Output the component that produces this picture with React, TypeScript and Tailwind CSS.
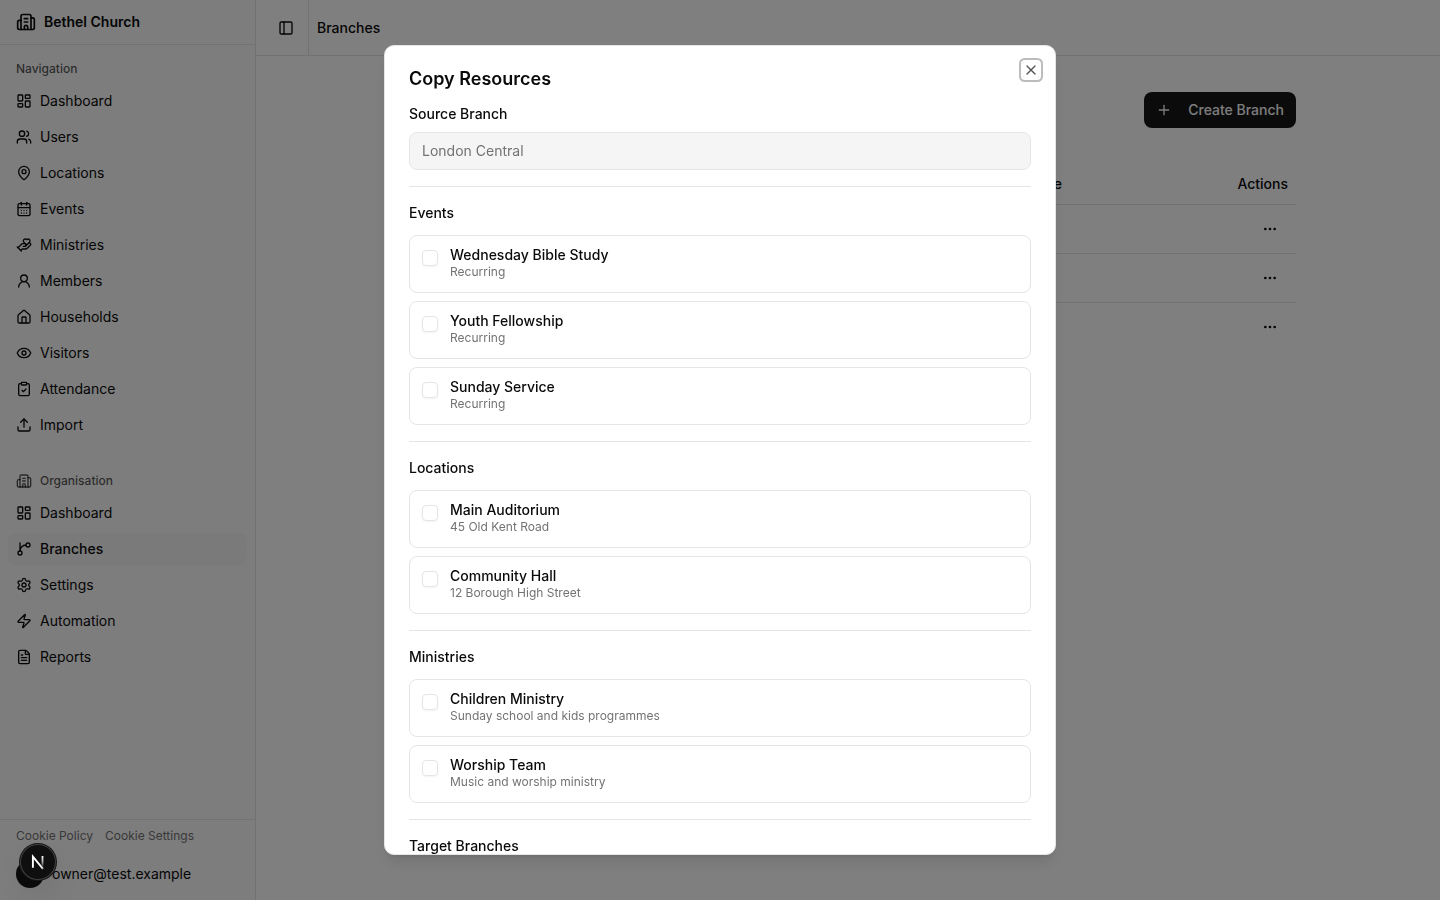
import React from "react";
import {
  Building2,
  CalendarDays,
  ClipboardCheck,
  Ellipsis,
  Eye,
  FileText,
  HandHeart,
  House,
  LayoutDashboard,
  MapPin,
  PanelLeft,
  Plus,
  Settings,
  Upload,
  UserRound,
  Users,
  X,
  Zap,
} from "lucide-react";

type IconType = React.ComponentType<{ className?: string }>;
type NavEntry = { label: string; icon: IconType; active?: boolean };
type Resource = { name: string; detail: string };

function BranchIcon({ className }: { className?: string }) {
  return (
    <svg
      viewBox="0 0 24 24"
      fill="none"
      stroke="currentColor"
      strokeWidth="2"
      strokeLinecap="round"
      strokeLinejoin="round"
      aria-hidden="true"
      className={className}
    >
      <path d="M15 6a9 9 0 0 0-9 9V3" />
      <circle cx="18" cy="6" r="3" />
      <circle cx="6" cy="18" r="3" />
    </svg>
  );
}

const navigation: NavEntry[] = [
  { label: "Dashboard", icon: LayoutDashboard },
  { label: "Users", icon: Users },
  { label: "Locations", icon: MapPin },
  { label: "Events", icon: CalendarDays },
  { label: "Ministries", icon: HandHeart },
  { label: "Members", icon: UserRound },
  { label: "Households", icon: House },
  { label: "Visitors", icon: Eye },
  { label: "Attendance", icon: ClipboardCheck },
  { label: "Import", icon: Upload },
];

const organisation: NavEntry[] = [
  { label: "Dashboard", icon: LayoutDashboard },
  { label: "Branches", icon: BranchIcon, active: true },
  { label: "Settings", icon: Settings },
  { label: "Automation", icon: Zap },
  { label: "Reports", icon: FileText },
];

const sections: { title: string; items: Resource[] }[] = [
  {
    title: "Events",
    items: [
      { name: "Wednesday Bible Study", detail: "Recurring" },
      { name: "Youth Fellowship", detail: "Recurring" },
      { name: "Sunday Service", detail: "Recurring" },
    ],
  },
  {
    title: "Locations",
    items: [
      { name: "Main Auditorium", detail: "45 Old Kent Road" },
      { name: "Community Hall", detail: "12 Borough High Street" },
    ],
  },
  {
    title: "Ministries",
    items: [
      { name: "Children Ministry", detail: "Sunday school and kids programmes" },
      { name: "Worship Team", detail: "Music and worship ministry" },
    ],
  },
  { title: "Target Branches", items: [] },
];

const rows = [1, 2, 3];

function NavList({ entries }: { entries: NavEntry[] }) {
  return (
    <ul className="flex flex-col gap-1">
      {entries.map(({ label, icon: Icon, active }) => (
        <li key={label}>
          <a
            href="#"
            aria-current={active ? "page" : undefined}
            className={
              active
                ? "flex h-8 items-center gap-2 rounded-lg bg-[#f5f5f5] px-2 text-sm font-medium"
                : "flex h-8 items-center gap-2 rounded-lg px-2 text-sm"
            }
          >
            <Icon className="size-4 shrink-0" />
            <span>{label}</span>
          </a>
        </li>
      ))}
    </ul>
  );
}

function Sidebar() {
  return (
    <aside className="flex h-screen w-64 shrink-0 flex-col border-r border-[#e5e5e5] bg-[#fafafa]">
      <div className="flex h-[45px] shrink-0 items-center gap-2 border-b border-[#e5e5e5] px-4 text-sm font-semibold">
        <Building2 className="size-5" />
        <span>Bethel Church</span>
      </div>
      <nav className="flex min-h-0 flex-1 flex-col gap-2 overflow-hidden">
        <section className="p-2">
          <h2 className="flex h-8 items-center px-2 text-xs font-medium text-[#0a0a0a]/70">Navigation</h2>
          <NavList entries={navigation} />
        </section>
        <section className="p-2">
          <h2 className="flex h-8 items-center gap-2 px-2 text-xs font-medium text-[#0a0a0a]/70">
            <Building2 className="size-4" />
            Organisation
          </h2>
          <NavList entries={organisation} />
        </section>
      </nav>
      <footer className="flex flex-col gap-3 border-t border-[#e5e5e5] p-2">
        <div className="flex gap-3 px-2 text-xs text-[#737373]">
          <a href="#">Cookie Policy</a>
          <button type="button">Cookie Settings</button>
        </div>
        <button type="button" className="flex h-9 items-center gap-2 px-2 text-sm">
          <span className="size-7 rounded-full bg-[#171717]" />
          <span>owner@test.example</span>
        </button>
      </footer>
    </aside>
  );
}

function BranchesPage() {
  return (
    <div className="flex min-w-0 flex-1 flex-col">
      <header className="flex h-14 items-center gap-2 border-b border-[#e5e5e5] px-4">
        <button type="button" aria-label="Toggle sidebar" className="flex size-7 items-center justify-center">
          <PanelLeft className="size-4" />
        </button>
        <div className="w-px self-stretch bg-[#e5e5e5]" />
        <h1 className="text-sm font-medium">Branches</h1>
      </header>
      <main className="mx-auto flex w-full max-w-4xl flex-col gap-9 pt-9">
        <button
          type="button"
          className="flex h-9 items-center gap-4 self-end rounded-lg bg-[#171717] px-3 text-sm font-medium text-[#fafafa]"
        >
          <Plus className="size-4" />
          Create Branch
        </button>
        <table className="w-full table-fixed text-sm">
          <thead>
            <tr className="h-10 border-b border-[#e5e5e5] text-right">
              <th className="px-2 font-medium">Timezone</th>
              <th className="w-[226px] px-2 font-medium">Actions</th>
            </tr>
          </thead>
          <tbody>
            {rows.map((row) => (
              <tr key={row} className="h-[49px] border-b border-[#e5e5e5] last:border-b-0">
                <td className="px-2" />
                <td className="px-2">
                  <button
                    type="button"
                    aria-label="Branch actions"
                    className="ml-auto flex h-8 w-9 items-center justify-center"
                  >
                    <Ellipsis className="size-4" />
                  </button>
                </td>
              </tr>
            ))}
          </tbody>
        </table>
      </main>
    </div>
  );
}

function ResourceCard({ item }: { item: Resource }) {
  return (
    <label className="flex items-start gap-3 rounded-lg border border-[#e5e5e5] p-3">
      <input
        type="checkbox"
        className="mt-0.5 size-4 shrink-0 appearance-none rounded-sm border border-[#e5e5e5] shadow-xs checked:bg-[#171717]"
      />
      <span className="flex flex-col gap-0.5">
        <span className="text-sm leading-[14px] font-medium">{item.name}</span>
        <span className="text-xs text-[#737373]">{item.detail}</span>
      </span>
    </label>
  );
}

function CopyResourcesDialog() {
  return (
    <div className="fixed inset-0 z-50 flex items-center justify-center bg-black/50">
      <div
        role="dialog"
        aria-modal="true"
        aria-labelledby="dialog-title"
        className="relative w-full max-w-2xl rounded-[10px] border border-[#e5e5e5] bg-white shadow-lg"
      >
        <div className="flex max-h-[calc(90vh-2px)] flex-col gap-4 overflow-y-auto rounded-[10px] p-6 [scrollbar-width:none]">
          <h2 id="dialog-title" className="text-lg leading-[18px] font-semibold">
            Copy Resources
          </h2>
          <div className="flex flex-col gap-2">
            <label htmlFor="source-branch" className="text-sm font-medium">
              Source Branch
            </label>
            <input
              id="source-branch"
              readOnly
              value="London Central"
              className="rounded-lg border border-[#e5e5e5] bg-[#f5f5f5] px-3 py-2 text-sm text-[#737373] outline-none"
            />
          </div>
          {sections.map((section) => (
            <React.Fragment key={section.title}>
              <hr className="m-0 border-t border-[#e5e5e5]" />
              <section className="flex flex-col gap-3">
                <h3 className="text-sm font-medium">{section.title}</h3>
                <div className="flex flex-col gap-2">
                  {section.items.map((item) => (
                    <ResourceCard key={item.name} item={item} />
                  ))}
                </div>
              </section>
            </React.Fragment>
          ))}
        </div>
        <button
          type="button"
          aria-label="Close"
          className="absolute top-4 right-4 rounded-xs opacity-70 ring-2 ring-[#a1a1a1] ring-offset-2 ring-offset-white outline-none"
        >
          <X className="size-4" />
        </button>
      </div>
    </div>
  );
}

function DevToolsBadge() {
  return (
    <button
      type="button"
      aria-label="Open developer tools"
      className="fixed bottom-5 left-5 z-60 size-9 rounded-full bg-[#0f0f0f] shadow-[0_0_0_1px_#171717,inset_0_0_0_1px_rgba(255,255,255,0.2),0_16px_32px_-8px_rgba(0,0,0,0.24)]"
    >
      <svg viewBox="0 0 36 36" className="size-9" fill="none" strokeWidth="1.9">
        <defs>
          <linearGradient id="stem" x1="22" y1="12" x2="22" y2="23" gradientUnits="userSpaceOnUse">
            <stop stopColor="#fff" />
            <stop offset="0.6" stopColor="#fff" stopOpacity="0.6" />
            <stop offset="1" stopColor="#fff" stopOpacity="0" />
          </linearGradient>
          <linearGradient id="stroke" x1="18" y1="18" x2="23.5" y2="25" gradientUnits="userSpaceOnUse">
            <stop stopColor="#fff" />
            <stop offset="0.8" stopColor="#fff" stopOpacity="0.9" />
            <stop offset="1" stopColor="#fff" stopOpacity="0.3" />
          </linearGradient>
        </defs>
        <path d="M23.2 25.2 L12.9 12.6 V23.8" stroke="url(#stroke)" />
        <path d="M21.6 12 h1.8 v11 h-1.8 z" fill="url(#stem)" />
      </svg>
    </button>
  );
}

export default function App() {
  return (
    <div className="flex min-h-screen bg-white font-['Inter','Liberation_Sans',sans-serif] text-[#0a0a0a] antialiased">
      <Sidebar />
      <BranchesPage />
      <CopyResourcesDialog />
      <DevToolsBadge />
    </div>
  );
}
